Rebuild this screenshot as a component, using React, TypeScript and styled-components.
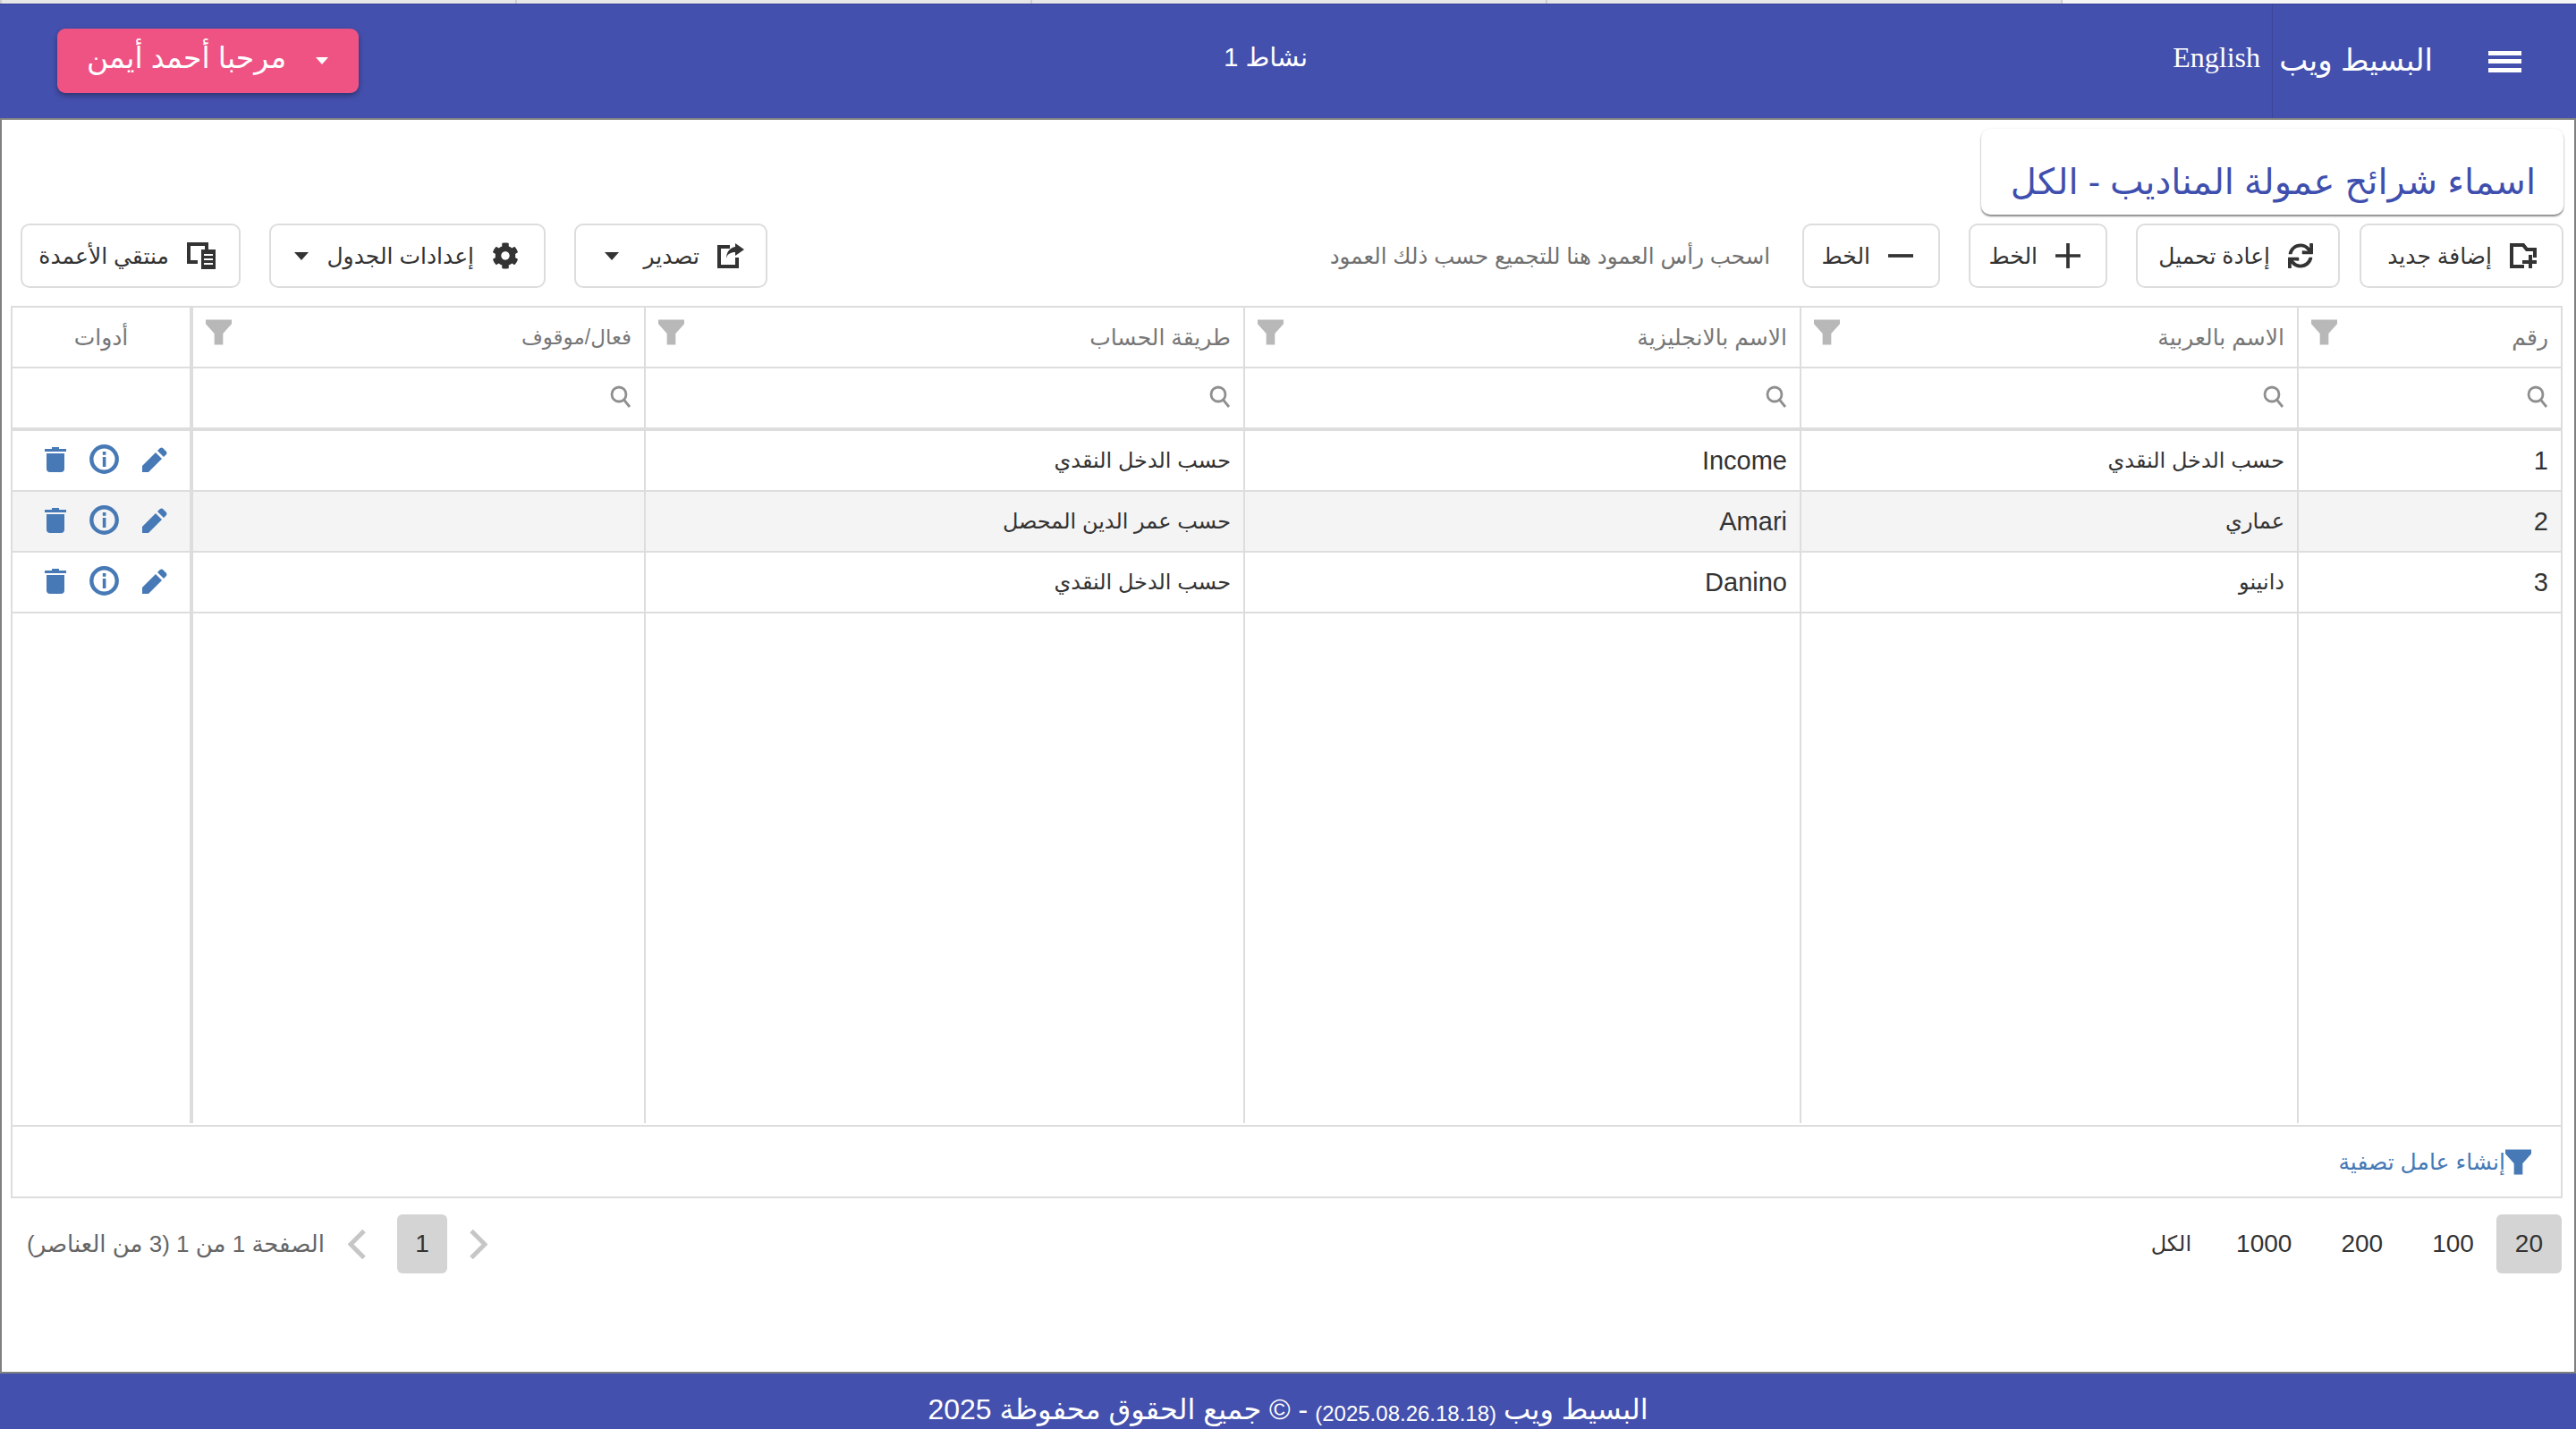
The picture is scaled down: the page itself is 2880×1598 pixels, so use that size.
import styled, { createGlobalStyle } from 'styled-components';
import { FaCog, FaSync } from 'react-icons/fa';

const GlobalStyle = createGlobalStyle`
  html, body {
    margin: 0;
    padding: 0;
    background: #fff;
  }
  * {
    box-sizing: border-box;
  }
`;

const BLUE = '#4450ae';
const LINE = '#dddddd';
const ICON_BLUE = '#4679b5';
const COLUMNS = '295px 556px 622px 670px 508px 1fr';

const Page = styled.div`
  width: 100vw;
  height: 100vh;
  display: flex;
  flex-direction: column;
  overflow: hidden;
  font-family: 'Liberation Sans', 'DejaVu Sans', sans-serif;
  color: #333;
`;

const TabStrip = styled.div`
  height: 4px;
  display: grid;
  grid-template-columns: repeat(5, 1fr);
`;

const TabStub = styled.div<{ $active?: boolean }>`
  background: ${(props) => (props.$active ? '#f5f5f5' : '#e7e7e7')};
  border-left: 2px solid #cfcfcf;
`;

const Header = styled.header`
  height: 130px;
  background: ${BLUE};
  border-top: 1px solid #34409a;
  border-bottom: 2px solid #808080;
  display: flex;
  align-items: center;
  color: #fff;
`;

const Brand = styled.div`
  width: 340px;
  height: 100%;
  display: flex;
  align-items: center;
  gap: 62px;
  padding-right: 61px;
  border-left: 1px solid #3b4699;
`;

const Hamburger = styled.div`
  width: 37px;
  height: 24px;
  display: flex;
  flex-direction: column;
  justify-content: space-between;
  flex-shrink: 0;
  span {
    display: block;
    height: 5px;
    background: #fff;
  }
`;

const BrandName = styled.div`
  font-size: 34px;
  white-space: nowrap;
  margin-top: -4px;
`;

const LangLink = styled.div`
  font-family: 'Liberation Serif', serif;
  font-size: 32px;
  margin-right: 13px;
  margin-top: -8px;
`;

const ActivityLabel = styled.div`
  flex: 1;
  text-align: center;
  font-size: 29px;
  margin-top: -9px;
`;

const UserButton = styled.button`
  width: 337px;
  height: 72px;
  margin-left: 64px;
  margin-top: -2px;
  padding: 0 34px 0 33px;
  border: none;
  border-radius: 9px;
  background: #ee5384;
  color: #fff;
  font-family: inherit;
  font-size: 33px;
  display: flex;
  align-items: center;
  justify-content: space-between;
  box-shadow: 0 3px 6px rgba(0, 0, 0, 0.35);
`;

const UserName = styled.span`
  padding-bottom: 6px;
  white-space: nowrap;
`;

const Caret = styled.span<{ $light?: boolean; $small?: boolean }>`
  width: 0;
  height: 0;
  flex-shrink: 0;
  border-style: solid;
  border-color: ${(props) => (props.$light ? '#fff' : '#333')} transparent transparent transparent;
  border-width: ${(props) => (props.$small ? '8px 7px 0 7px' : '9px 8px 0 8px')};
`;

const Main = styled.main`
  flex: 1;
  min-height: 0;
  display: flex;
  flex-direction: column;
  background: #fff;
  border-left: 2px solid #808080;
  border-right: 2px solid #808080;
`;

const TitleRow = styled.div`
  display: flex;
  padding: 10px 12px 0;
`;

const TitleCard = styled.h1`
  width: 651px;
  height: 96px;
  margin: 0;
  padding: 0 31px 14px 0;
  display: flex;
  align-items: flex-end;
  background: #fff;
  border-radius: 10px;
  box-shadow: 0 2px 2px rgba(0, 0, 0, 0.45), 0 0 3px rgba(0, 0, 0, 0.08);
  color: #3f4fae;
  font-size: 40px;
  font-weight: 400;
  white-space: nowrap;
`;

const Toolbar = styled.div`
  display: flex;
  justify-content: space-between;
  align-items: center;
  height: 72px;
  margin-top: 10px;
  padding: 0 12px 0 21px;
`;

const ToolGroup = styled.div`
  display: flex;
  align-items: center;
  gap: 32px;
`;

const ToolButton = styled.button<{ $width: number; $tight?: boolean; $inset?: number }>`
  width: ${(props) => props.$width}px;
  height: 72px;
  margin-right: ${(props) => (props.$tight ? '-10px' : '0')};
  padding: 0 ${(props) => props.$inset ?? 28}px 0 32px;
  display: flex;
  align-items: center;
  gap: 20px;
  background: #fff;
  border: 2px solid ${LINE};
  border-radius: 10px;
  color: #333;
  font-family: inherit;
  font-size: 25px;
  white-space: nowrap;
  svg {
    flex-shrink: 0;
  }
`;

const ToolLabel = styled.span`
  flex: 1;
  text-align: right;
`;

const DragHint = styled.div`
  margin-right: 4px;
  font-size: 24.5px;
  color: #707070;
  white-space: nowrap;
`;

const DataGrid = styled.section`
  height: 998px;
  margin: 20px 13px 0 10px;
  display: flex;
  flex-direction: column;
  border: 2px solid ${LINE};
`;

const GridRow = styled.div<{ $alt?: boolean; $heavy?: boolean; $height?: number }>`
  display: grid;
  grid-template-columns: ${COLUMNS};
  height: ${(props) => props.$height ?? 68}px;
  flex-shrink: 0;
  background: ${(props) => (props.$alt ? '#f4f4f4' : '#fff')};
  border-bottom: ${(props) => (props.$heavy ? '4px' : '2px')} solid ${LINE};
`;

const FillerRow = styled.div`
  flex: 1;
  display: grid;
  grid-template-columns: ${COLUMNS};
  margin-bottom: 2px;
`;

const Cell = styled.div<{ $last?: boolean; $fixed?: boolean }>`
  display: flex;
  align-items: center;
  justify-content: ${(props) => (props.$fixed ? 'center' : 'space-between')};
  padding: 0 14px;
  min-width: 0;
  border-left: ${(props) => (props.$last ? '0' : props.$fixed ? '0' : '2px')} solid ${LINE};
`;

const ToolsEdge = styled(Cell)`
  border-left: 4px solid ${LINE};
`;

const HeaderCell = styled(Cell)`
  font-size: 25px;
  color: #777;
`;

const HeaderToolsEdge = styled(HeaderCell)`
  font-size: 23px;
  border-left: 4px solid ${LINE};
`;

const DataText = styled.span<{ $arabic?: boolean }>`
  font-size: ${(props) => (props.$arabic ? '24px' : '29px')};
  color: #333;
  white-space: nowrap;
`;

const FunnelHolder = styled.span`
  display: flex;
  margin-top: -12px;
`;

const SearchHolder = styled.span`
  display: flex;
  margin-top: -3px;
`;

const ActionIcons = styled.div`
  width: 100%;
  display: flex;
  align-items: center;
  gap: 26px;
  padding: 0 11px 3px 0;
`;

const FilterPanel = styled.div`
  height: 80px;
  flex-shrink: 0;
  display: flex;
  align-items: center;
  padding: 0 33px 0 0;
  border-top: 2px solid ${LINE};
  color: ${ICON_BLUE};
  font-size: 25px;
  white-space: nowrap;
`;

const Pager = styled.div`
  display: flex;
  justify-content: space-between;
  align-items: center;
  margin-top: 18px;
  padding: 0 14px 0 28px;
`;

const PageSizes = styled.div`
  display: flex;
  align-items: center;
`;

const PageChip = styled.div<{ $active?: boolean; $word?: boolean }>`
  height: 66px;
  display: flex;
  align-items: center;
  padding: 0 ${(props) => (props.$word ? '16px' : '21px')};
  margin-left: ${(props) => (props.$active ? '4px' : '13px')};
  border-radius: 6px;
  background: ${(props) => (props.$active ? '#d4d4d4' : 'transparent')};
  font-size: ${(props) => (props.$word ? '24px' : '28px')};
  color: #333;
`;

const PageNav = styled.div`
  display: flex;
  align-items: center;
`;

const PageNumber = styled.div`
  width: 56px;
  height: 66px;
  margin: 0 25px 0 35px;
  display: flex;
  align-items: center;
  justify-content: center;
  border-radius: 6px;
  background: #d4d4d4;
  font-size: 28px;
  color: #333;
`;

const PageInfo = styled.div`
  margin-right: 26px;
  font-size: 26px;
  color: #666;
  white-space: nowrap;
`;

const Footer = styled.footer`
  height: 64px;
  flex-shrink: 0;
  background: ${BLUE};
  border-top: 2px solid #808080;
  display: flex;
  align-items: flex-end;
  justify-content: center;
  gap: 8px;
  padding-bottom: 3px;
  color: #fff;
  font-size: 32px;
  white-space: nowrap;
`;

const BuildStamp = styled.span`
  font-size: 24px;
`;

const AddFileIcon = () => (
  <svg width="30" height="28" viewBox="0 0 30 28" fill="#333">
    <path fillRule="evenodd" d="M0 0H16L20 5H30V16H26V9H18L14 4H4V24H16V28H0Z" />
    <path d="M21 13h4v6h5v4h-5v5h-4v-5h-7v-4h7z" />
  </svg>
);

const PlusIcon = () => (
  <svg width="28" height="28" viewBox="0 0 30 30" fill="#333">
    <path d="M13 0h4v13h13v4H17v13h-4V17H0v-4h13z" />
  </svg>
);

const MinusIcon = () => (
  <svg width="28" height="28" viewBox="0 0 30 30" fill="#333">
    <path d="M0 13h30v4H0z" />
  </svg>
);

const ExportIcon = () => (
  <svg width="30" height="28" viewBox="0 0 30 28" fill="#333">
    <path d="M0 2H14V6H4V24H20V16H24V28H0Z" />
    <path d="M20 0L30 7L20 14V10C15 10 11 12 10 17C10 10 14 5 20 4Z" />
  </svg>
);

const ColumnsIcon = () => (
  <svg width="32" height="30" viewBox="0 0 32 30" fill="#333">
    <path d="M0 0H24V8H20V4H4V20H12V24H0Z" />
    <path d="M16 8H32V30H16Z" />
    <path d="M19 13h10v2H19zM19 18h10v2H19zM19 23h10v2H19z" fill="#fff" />
  </svg>
);

const FunnelIcon = ({ color = '#b8b8b8' }: { color?: string }) => (
  <svg width="29" height="29" viewBox="0 0 30 29" fill={color}>
    <path d="M0 0H30V5L20 16V29H10V16L0 5Z" />
  </svg>
);

const SearchIcon = () => (
  <SearchHolder>
    <svg width="24" height="25" viewBox="0 0 24 25" fill="none" stroke="#8f8f8f" strokeWidth="2.8">
      <circle cx="10" cy="10" r="8" />
      <path d="M15.5 16L22 24" />
    </svg>
  </SearchHolder>
);

const PencilIcon = () => (
  <svg width="28" height="28" viewBox="0 0 28 28" fill={ICON_BLUE}>
    <path d="M0 21L15 6L22 13L7 28H0Z" />
    <path d="M17 4L20 1Q22 0 23 1L27 5Q28 7 27 8L24 11Z" />
  </svg>
);

const InfoIcon = () => (
  <svg width="33" height="33" viewBox="0 0 33 33" fill={ICON_BLUE}>
    <circle cx="16.5" cy="16.5" r="14.2" fill="none" stroke={ICON_BLUE} strokeWidth="4.4" />
    <rect x="14.8" y="8" width="3.6" height="3.8" />
    <rect x="14.8" y="14" width="3.6" height="11" />
  </svg>
);

const TrashIcon = () => (
  <svg width="24" height="28" viewBox="0 0 24 28" fill={ICON_BLUE}>
    <path d="M8 0h8v2h8v3H0V2h8z" />
    <path d="M2 7H22V24a4 4 0 0 1-4 4H6a4 4 0 0 1-4-4Z" />
  </svg>
);

const Chevron = ({ left }: { left?: boolean }) => (
  <svg width="20" height="33" viewBox="0 0 20 33" fill="none" stroke="#c6c6c6" strokeWidth="5">
    <path d={left ? 'M18 1.5L3 16.5L18 31.5' : 'M2 1.5L17 16.5L2 31.5'} />
  </svg>
);

const HEADERS = ['رقم', 'الاسم بالعربية', 'الاسم بالانجليزية', 'طريقة الحساب', 'فعال/موقوف'];

const rows = [
  { id: 1, ar: 'حسب الدخل النقدي', en: 'Income', method: 'حسب الدخل النقدي' },
  { id: 2, ar: 'عماري', en: 'Amari', method: 'حسب عمر الدين المحصل' },
  { id: 3, ar: 'دانينو', en: 'Danino', method: 'حسب الدخل النقدي' },
];

export default function App() {
  return (
    <Page dir="rtl">
      <GlobalStyle />
      <TabStrip>
        <TabStub $active />
        <TabStub />
        <TabStub />
        <TabStub />
        <TabStub />
      </TabStrip>

      <Header>
        <Brand>
          <Hamburger>
            <span />
            <span />
            <span />
          </Hamburger>
          <BrandName>البسيط ويب</BrandName>
        </Brand>
        <LangLink>English</LangLink>
        <ActivityLabel>نشاط 1</ActivityLabel>
        <UserButton>
          <Caret $light $small />
          <UserName>مرحبا أحمد أيمن</UserName>
        </UserButton>
      </Header>

      <Main>
        <TitleRow>
          <TitleCard>اسماء شرائح عمولة المناديب - الكل</TitleCard>
        </TitleRow>

        <Toolbar>
          <ToolGroup>
            <ToolButton $width={228}>
              <AddFileIcon />
              <ToolLabel>إضافة جديد</ToolLabel>
            </ToolButton>
            <ToolButton $width={228} $tight>
              <FaSync size={28} color="#333" />
              <ToolLabel>إعادة تحميل</ToolLabel>
            </ToolButton>
            <ToolButton $width={155}>
              <PlusIcon />
              <ToolLabel>الخط</ToolLabel>
            </ToolButton>
            <ToolButton $width={154}>
              <MinusIcon />
              <ToolLabel>الخط</ToolLabel>
            </ToolButton>
            <DragHint>اسحب رأس العمود هنا للتجميع حسب ذلك العمود</DragHint>
          </ToolGroup>
          <ToolGroup>
            <ToolButton $width={216} $inset={24}>
              <ExportIcon />
              <ToolLabel>تصدير</ToolLabel>
              <Caret />
            </ToolButton>
            <ToolButton $width={309}>
              <FaCog size={30} color="#333" />
              <ToolLabel>إعدادات الجدول</ToolLabel>
              <Caret />
            </ToolButton>
            <ToolButton $width={246} $inset={26}>
              <ColumnsIcon />
              <ToolLabel>منتقي الأعمدة</ToolLabel>
            </ToolButton>
          </ToolGroup>
        </Toolbar>

        <DataGrid>
          <GridRow>
            {HEADERS.map((label, i) =>
              i === HEADERS.length - 1 ? (
                <HeaderToolsEdge key={label}>
                  <span>{label}</span>
                  <FunnelHolder>
                    <FunnelIcon />
                  </FunnelHolder>
                </HeaderToolsEdge>
              ) : (
                <HeaderCell key={label}>
                  <span>{label}</span>
                  <FunnelHolder>
                    <FunnelIcon />
                  </FunnelHolder>
                </HeaderCell>
              ),
            )}
            <HeaderCell $fixed $last>
              <span>أدوات</span>
            </HeaderCell>
          </GridRow>

          <GridRow $heavy $height={70}>
            {HEADERS.map((label, i) =>
              i === HEADERS.length - 1 ? (
                <ToolsEdge key={label}>
                  <SearchIcon />
                </ToolsEdge>
              ) : (
                <Cell key={label}>
                  <SearchIcon />
                </Cell>
              ),
            )}
            <Cell $fixed $last />
          </GridRow>

          {rows.map((row) => (
            <GridRow key={row.id} $alt={row.id === 2}>
              <Cell>
                <DataText>{row.id}</DataText>
              </Cell>
              <Cell>
                <DataText $arabic>{row.ar}</DataText>
              </Cell>
              <Cell>
                <DataText>{row.en}</DataText>
              </Cell>
              <Cell>
                <DataText $arabic>{row.method}</DataText>
              </Cell>
              <ToolsEdge />
              <Cell $fixed $last>
                <ActionIcons>
                  <PencilIcon />
                  <InfoIcon />
                  <TrashIcon />
                </ActionIcons>
              </Cell>
            </GridRow>
          ))}

          <FillerRow>
            <Cell />
            <Cell />
            <Cell />
            <Cell />
            <ToolsEdge />
            <Cell $fixed $last />
          </FillerRow>

          <FilterPanel>
            <FunnelIcon color={ICON_BLUE} />
            <span>إنشاء عامل تصفية</span>
          </FilterPanel>
        </DataGrid>

        <Pager>
          <PageSizes>
            <PageChip $active>20</PageChip>
            <PageChip>100</PageChip>
            <PageChip>200</PageChip>
            <PageChip>1000</PageChip>
            <PageChip $word>الكل</PageChip>
          </PageSizes>
          <PageNav>
            <Chevron />
            <PageNumber>1</PageNumber>
            <Chevron left />
            <PageInfo>الصفحة 1 من 1 (3 من العناصر)</PageInfo>
          </PageNav>
        </Pager>
      </Main>

      <Footer>
        <span>البسيط ويب</span>
        <BuildStamp>(2025.08.26.18.18)</BuildStamp>
        <span>- © جميع الحقوق محفوظة 2025</span>
      </Footer>
    </Page>
  );
}
